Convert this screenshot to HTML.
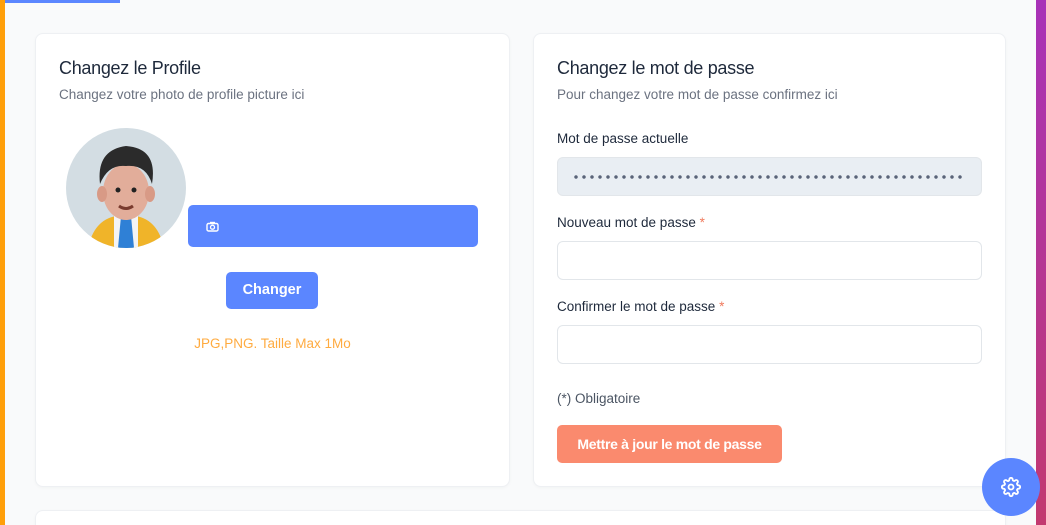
<!DOCTYPE html>
<html><head><meta charset="utf-8"><style>
*{box-sizing:border-box;margin:0;padding:0}
html,body{width:1046px;height:525px;overflow:hidden}
body{background:#f9fafb;font-family:"Liberation Sans",sans-serif;position:relative;color:#1f2937}
.lbar{position:absolute;left:0;top:0;width:5px;height:525px;background:#ff9f0a}
.rbar{position:absolute;right:0;top:0;width:10px;height:525px;background:linear-gradient(#a832b8,#c2396f)}
.top{position:absolute;left:5px;top:0;width:115px;height:3px;background:#5b86ff}
.card{position:absolute;background:#fff;border:1px solid #eef0f3;border-radius:8px;box-shadow:0 1px 3px rgba(0,0,0,.03)}
h2{font-size:18px;font-weight:normal;color:#1e293b;position:absolute;letter-spacing:-.3px}
.sub{font-size:13.5px;color:#6b7280;position:absolute}
.lab{position:absolute;font-size:13.5px;color:#1e293b}
.lab b{color:#f07a5d;font-weight:normal}
.inp{position:absolute;left:23px;width:425px;height:39px;border:1px solid #e2e6ea;border-radius:6px;background:#fff}
</style></head><body>
<div class="lbar"></div><div class="rbar"></div><div class="top"></div>
<div class="card" style="left:35px;top:33px;width:475px;height:454px">
<h2 style="left:23px;top:24px">Changez le Profile</h2>
<div class="sub" style="left:23px;top:53px">Changez votre photo de profile picture ici</div>
<div style="position:absolute;left:30px;top:94px;width:120px;height:120px;border-radius:50%;background:#d3dde3;overflow:hidden">
<svg width="120" height="120" viewBox="0 0 120 120">
<path d="M22 120 Q28 92 50 88 L70 88 Q92 92 98 120Z" fill="#f0b429"/>
<rect x="48" y="84" width="24" height="36" fill="#f3f4f6"/>
<path d="M55 88 L65 88 L68 120 L52 120Z" fill="#2f80d6"/>
<ellipse cx="60" cy="64" rx="23" ry="28" fill="#e2ad9a"/>
<ellipse cx="36" cy="66" rx="5" ry="8" fill="#d89a86"/><ellipse cx="84" cy="66" rx="5" ry="8" fill="#d89a86"/>
<path d="M34 56 Q30 22 60 18 Q92 20 86 56 Q80 36 60 38 Q42 36 34 56Z" fill="#2b2b2b"/>
<circle cx="52" cy="62" r="2.5" fill="#222"/><circle cx="68" cy="62" r="2.5" fill="#222"/>
<path d="M53 78 Q60 83 67 78" stroke="#7a3b2e" stroke-width="3" fill="none"/>
</svg></div>
<div style="position:absolute;left:152px;top:171px;width:290px;height:42px;background:#5b86ff;border-radius:5px">
<svg style="position:absolute;left:18px;top:16px" width="13" height="11" viewBox="0 0 13 11"><rect x="1" y="2.5" width="11" height="7.5" rx="1.5" fill="none" stroke="#fff" stroke-width="1.4"/><rect x="4" y="0.8" width="5" height="2" fill="#fff"/><circle cx="6.5" cy="6.2" r="2" fill="none" stroke="#fff" stroke-width="1.3"/></svg></div>
<div style="position:absolute;left:190px;top:238px;width:92px;height:37px;background:#5b86ff;border-radius:5px;color:#fff;font-size:14.5px;font-weight:bold;text-align:center;line-height:37px">Changer</div>
<div style="position:absolute;left:0;width:473px;top:302px;text-align:center;font-size:13.5px;color:#ffab40">JPG,PNG. Taille Max 1Mo</div>
</div>
<div class="card" style="left:533px;top:33px;width:473px;height:454px">
<h2 style="left:23px;top:24px">Changez le mot de passe</h2>
<div class="sub" style="left:23px;top:53px">Pour changez votre mot de passe confirmez ici</div>
<div class="lab" style="left:23px;top:97px">Mot de passe actuelle</div>
<div class="inp" style="top:123px;background:#e9eef3"><div style="position:absolute;left:14px;top:17px;width:394px;height:4px;background:radial-gradient(circle,#5a6478 1.5px,transparent 2px) 0 0/8px 4px repeat-x"></div></div>
<div class="lab" style="left:23px;top:181px">Nouveau mot de passe <b>*</b></div>
<div class="inp" style="top:207px"></div>
<div class="lab" style="left:23px;top:265px">Confirmer le mot de passe <b>*</b></div>
<div class="inp" style="top:291px"></div>
<div class="lab" style="left:23px;top:357px;color:#4b5563">(*) Obligatoire</div>
<div style="position:absolute;left:23px;top:391px;width:225px;height:38px;background:#fa8a6e;border-radius:5px;color:#fff;font-size:14px;font-weight:bold;text-align:center;line-height:38px;letter-spacing:-.3px">Mettre à jour le mot de passe</div>
</div>
<div class="card" style="left:35px;top:510px;width:971px;height:40px"></div>
<div style="position:absolute;left:982px;top:458px;width:58px;height:58px;border-radius:50%;background:#5b86ff">
<svg style="position:absolute;left:19px;top:19px" width="20" height="20" viewBox="0 0 24 24" fill="none" stroke="#fff" stroke-width="2.2"><circle cx="12" cy="12" r="3"/><path d="M19.4 15a1.65 1.65 0 0 0 .33 1.820l.06.06a2 2 0 1 1-2.83 2.83l-.06-.06a1.650 1.650 0 0 0-1.82-.33 1.650 1.650 0 0 0-1 1.51V21a2 2 0 1 1-4 0v-.09A1.650 1.650 0 0 0 9 19.4a1.650 1.650 0 0 0-1.82.33l-.06.06a2 2 0 1 1-2.83-2.83l.06-.06A1.650 1.650 0 0 0 4.68 15a1.650 1.650 0 0 0-1.51-1H3a2 2 0 1 1 0-4h.09A1.650 1.650 0 0 0 4.6 9a1.650 1.650 0 0 0-.33-1.82l-.06-.06a2 2 0 1 1 2.83-2.83l.06.06A1.650 1.650 0 0 0 9 4.68 1.650 1.650 0 0 0 10 3.17V3a2 2 0 1 1 4 0v.09a1.650 1.650 0 0 0 1 1.51 1.650 1.650 0 0 0 1.82-.33l.06-.06a2 2 0 1 1 2.83 2.83l-.06.06A1.650 1.650 0 0 0 19.4 9a1.650 1.650 0 0 0 1.51 1H21a2 2 0 1 1 0 4h-.09a1.650 1.650 0 0 0-1.51 1z"/></svg></div>
</body></html>
